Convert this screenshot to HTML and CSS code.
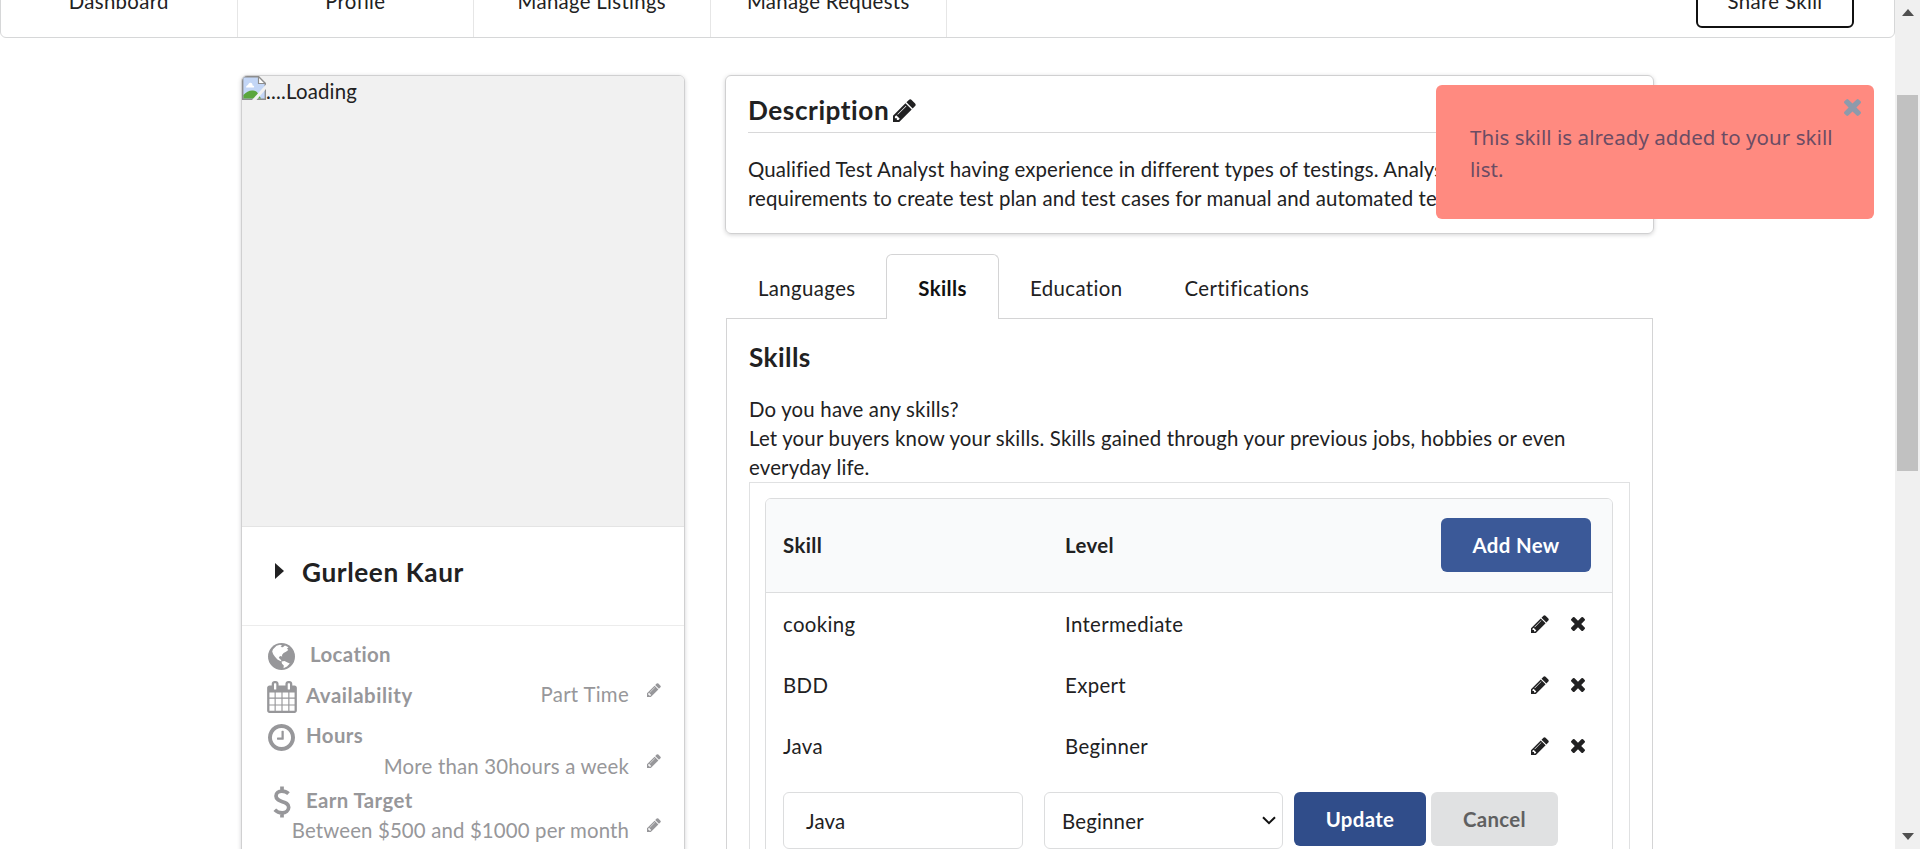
FILE: index.html
```
<!DOCTYPE html>
<html lang="en">
<head>
<meta charset="utf-8">
<title>Profile</title>
<link rel="stylesheet" href="styles.css">
</head>
<body>
<svg class="sprite" aria-hidden="true">
  <symbol id="pencil" viewBox="128 128 1536 1536"><path d="M491 1536l91-91-235-235-91 91v107h128v128h107zm523-928q0-22-22-22-10 0-17 7l-542 542q-7 7-7 17 0 22 22 22 10 0 17-7l542-542q7-7 7-17zm-54-192l416 416-832 832h-416v-416zm683 96q0 53-37 90l-166 166-416-416 166-165q36-38 90-38 53 0 91 38l235 234q37 39 37 91z"/></symbol>
  <symbol id="times" viewBox="302 366 1188 1188"><path d="M1490 1322q0 40-28 68l-136 136q-28 28-68 28t-68-28l-294-294-294 294q-28 28-68 28t-68-28l-136-136q-28-28-28-68t28-68l294-294-294-294q-28-28-28-68t28-68l136-136q28-28 68-28t68 28l294 294 294-294q28-28 68-28t68 28l136 136q28 28 28 68t-28 68l-294 294 294 294q28 28 28 68z"/></symbol>
  <symbol id="clock" viewBox="128 128 1536 1536"><path d="M1024 544v448q0 14-9 23t-23 9h-320q-14 0-23-9t-9-23v-64q0-14 9-23t23-9h224v-352q0-14 9-23t23-9h64q14 0 23 9t9 23zm416 352q0-148-73-273t-198-198-273-73-273 73-198 198-73 273 73 273 198 198 273 73 273-73 198-198 73-273zm224 0q0 209-103 385.5t-279.5 279.5-385.5 103-385.5-103-279.5-279.5-103-385.5 103-385.5 279.5-279.5 385.5-103 385.5 103 279.5 279.5 103 385.5z"/></symbol>
  <symbol id="calendar" viewBox="64 0 1664 1792"><path d="M192 1664h288v-288h-288v288zm352 0h320v-288h-320v288zm-352-352h288v-320h-288v320zm352 0h320v-320h-320v320zm-352-384h288v-288h-288v288zm736 736h320v-288h-320v288zm-384-736h320v-288h-320v288zm768 736h288v-288h-288v288zm-384-352h320v-320h-320v320zm-352-864v-288q0-13-9.500-22.500t-22.500-9.500h-64q-13 0-22.500 9.500t-9.500 22.500v288q0 13 9.500 22.500t22.500 9.500h64q13 0 22.500-9.500t9.500-22.500zm736 864h288v-320h-288v320zm-384-384h320v-288h-320v288zm384 0h288v-288h-288v288zm32-480v-288q0-13-9.500-22.500t-22.500-9.500h-64q-13 0-22.500 9.500t-9.500 22.500v288q0 13 9.500 22.500t22.500 9.500h64q13 0 22.500-9.500t9.500-22.500zm384-64v1280q0 52-38 90t-90 38h-1408q-52 0-90-38t-38-90v-1280q0-52 38-90t90-38h128v-96q0-66 47-113t113-47h64q66 0 113 47t47 113v96h384v-96q0-66 47-113t113-47h64q66 0 113 47t47 113v96h128q52 0 90 38t38 90z"/></symbol>
  <symbol id="globe" viewBox="0 0 27 27"><circle cx="13.500" cy="13.500" r="13.500"/><path fill="#fff" d="M5 6.200L8.500 2.800 12 1.700 14 2.600 12.600 4 14.800 4.200 17 2.600 20.500 4.300 19 5.600 20.300 7 18 8.800 15.600 10 14 12 14.200 13.400 12 13 10.800 14.800 12.200 16.200 13.400 17.300 12.800 18.200 9.400 16.600 6.800 13.600 5.200 11.200 4.200 8.600z"/><path fill="#fff" d="M13.500 18.600L16.500 18 19.500 19.400 21.800 20.600 19 23.500 15.500 25.300 15.800 22.500 14 20.800z"/></symbol>
  <symbol id="dollar" viewBox="0 0 18 32"><path fill="none" stroke="currentColor" stroke-width="3.700" d="M15.500 7.700C13.500 5.800 11 5.200 8.800 5.200 5.500 5.200 3 6.800 3 10c0 7.200 12.700 4.200 12.700 11.300 0 3.400-3 5.500-6.600 5.500-3 0-5.500-1.200-7.300-3.100M9 .5V5M9 27v4.600"/></symbol>
</svg>
<div class="window">
  <div class="page">
    <nav class="nav">
      <a class="nav-item">Dashboard</a>
      <a class="nav-item">Profile</a>
      <a class="nav-item">Manage Listings</a>
      <a class="nav-item">Manage Requests</a>
      <button class="share">Share Skill</button>
    </nav>
    <main class="main">
      <aside class="card">
        <div class="photo">
          <svg class="broken" viewBox="0 0 24 24"><path d="M.7.700H16.500L23.300 7.500V23.300H.7z" fill="#c3d6f6" stroke="#8d8d8d" stroke-width="1.400"/><path d="M16.500.7V7.500H23.300z" fill="#fff" stroke="#8d8d8d" stroke-width="1.200"/><path d="M4 11.500c0-2 2-2 2.500-3.500C8 5.500 11 7 10.500 9.500 12.500 9.500 12.500 11.500 11.500 11.500z" fill="#fff"/><path d="M1.400 22.600V19C4 16 8 14 11 14.500c3 0 5 2 8 8.100z" fill="#5aa63c"/><path d="M24 8.500V13L14.500 24H10z" fill="#f1f1f1"/></svg><span>....Loading</span>
        </div>
        <div class="name"><i class="caret"></i><span>Gurleen Kaur</span></div>
        <div class="details">
          <div class="row loc"><svg class="ico round"><use href="#globe"/></svg><b>Location</b></div>
          <div class="row avail"><svg class="ico cal"><use href="#calendar"/></svg><b>Availability</b><span class="value">Part Time</span><svg class="edit"><use href="#pencil"/></svg></div>
          <div class="row hours"><svg class="ico round"><use href="#clock"/></svg><b>Hours</b></div>
          <div class="row val"><span class="value">More than 30hours a week</span><svg class="edit"><use href="#pencil"/></svg></div>
          <div class="row earn"><svg class="ico usd"><use href="#dollar"/></svg><b>Earn Target</b></div>
          <div class="row val last"><span class="value">Between $500 and $1000 per month</span><svg class="edit"><use href="#pencil"/></svg></div>
        </div>
      </aside>
      <section class="content">
        <div class="description">
          <h3 class="desc-title">Description<svg class="title-edit"><use href="#pencil"/></svg></h3>
          <p class="desc-text">Qualified Test Analyst having experience in different types of testings. Analysing<br>requirements to create test plan and test cases for manual and automated testing.</p>
        </div>
        <div class="tabs">
          <a class="tab first">Languages</a>
          <a class="tab active">Skills</a>
          <a class="tab">Education</a>
          <a class="tab">Certifications</a>
        </div>
        <div class="panel">
          <h3 class="panel-title">Skills</h3>
          <p class="panel-text">Do you have any skills?<br>Let your buyers know your skills. Skills gained through your previous jobs, hobbies or even<br>everyday life.</p>
          <div class="segment">
            <div class="table">
              <div class="line head"><b>Skill</b><b>Level</b><button class="btn add">Add New</button></div>
              <div class="line"><span>cooking</span><span>Intermediate</span><span class="actions"><svg class="pen"><use href="#pencil"/></svg><svg class="del"><use href="#times"/></svg></span></div>
              <div class="line"><span>BDD</span><span>Expert</span><span class="actions"><svg class="pen"><use href="#pencil"/></svg><svg class="del"><use href="#times"/></svg></span></div>
              <div class="line"><span>Java</span><span>Beginner</span><span class="actions"><svg class="pen"><use href="#pencil"/></svg><svg class="del"><use href="#times"/></svg></span></div>
              <div class="form">
                <div class="field text">Java</div>
                <div class="field select"><span>Beginner</span><svg class="chev" viewBox="0 0 14 9"><path d="M1 1.200l6 6 6-6"/></svg></div>
                <button class="btn update">Update</button>
                <button class="btn cancel">Cancel</button>
              </div>
            </div>
          </div>
        </div>
      </section>
    </main>
    <div class="toast"><span>This skill is already added to your skill<br>list.</span><svg class="close"><use href="#times"/></svg></div>
  </div>
  <div class="scroll"><i class="arrow up"></i><i class="thumb"></i><i class="arrow down"></i></div>
</div>
</body>
</html>
```
FILE: styles.css
```
* { box-sizing: border-box; }
body { margin: 0; height: 849px; overflow: hidden; background: #fff; font: 20.4px/29px Lato, sans-serif; letter-spacing: .19px; color: #212122; }
h3, p { margin: 0; }
b, h3 { font-weight: 700; letter-spacing: .4px; }
button { font: 700 20.4px/1 Lato, sans-serif; letter-spacing: .35px; padding: 0; border: 0; }
svg { flex: none; fill: currentColor; }
.sprite { position: absolute; width: 0; height: 0; }
.window { display: flex; height: 849px; overflow: hidden; }
.page { position: relative; width: 1895px; height: 849px; overflow: hidden; }

.nav { display: flex; height: 73px; margin-top: -35px; border: 1px solid #d6d7d8; border-radius: 6px; }
.nav-item { width: 236.500px; border-right: 1px solid #e6e6e6; text-align: center; line-height: 71px; letter-spacing: .3px; }
.share { margin: 8px 40px 0 auto; width: 158px; height: 54px; border: 2px solid #111; border-radius: 6px; background: #fff; color: #212122; font-weight: 400; }

.main { display: flex; gap: 40px; padding: 37px 0 0 241px; }
.card { width: 444px; height: 830px; border: 1px solid #d0d0d1; border-radius: 6px; box-shadow: 0 1px 4px #d4d4d5; overflow: hidden; }
.photo { display: flex; height: 451px; background: #f1f1f1; border-bottom: 1px solid #e4e4e4; line-height: 30px; }
.broken { width: 24px; height: 24px; }
.name { display: flex; align-items: center; height: 99px; padding: 0 0 7px 33px; border-bottom: 1px solid #ececec; font-size: 26.2px; font-weight: 700; letter-spacing: .6px; }
.caret { width: 10px; margin: -3px 17px 0 0; border: solid transparent; border-width: 8px 0 8px 9px; border-left-color: #212122; }
.details { padding: 9px 0 0 24px; color: #97979a; }
.row { display: flex; align-items: center; }
.row b { margin-top: -3px; }
.ico { margin-right: 9px; }
.round { width: 27px; height: 27px; margin: 0 11px 0 2px; }
.cal { width: 30px; height: 32px; margin-left: 1px; }
.usd { width: 18px; height: 32px; margin: 0 15px 0 7px; }
.loc { height: 42px; }
.loc .ico { margin-right: 15px; }
.avail { height: 39px; }
.avail b { letter-spacing: .55px; }
.avail .value { margin-top: -4px; letter-spacing: .3px; }
.hours { height: 43px; }
.hours b { margin-top: -4px; }
.earn { height: 35px; margin-top: 3px; }
.val { height: 30px; margin-top: -8px; }
.val.last { margin-top: -4px; letter-spacing: .14px; }
.value { margin-left: auto; }
.edit { width: 14px; height: 14px; margin: -10px 23px 0 18px; }
.avail .edit { margin-top: -14px; }

.content { width: 929px; }
.description { height: 159px; padding: 18px 22px 0; border: 1px solid #d0d0d1; border-radius: 6px; box-shadow: 0 1px 4px #d4d4d5; }
.desc-title { display: flex; align-items: center; height: 39px; border-bottom: 1px solid #d8d8d9; padding-bottom: 6px; font-size: 26.2px; letter-spacing: .55px; }
.title-edit { width: 23px; height: 23px; margin-left: 4px; }
.desc-text { padding-top: 22px; white-space: nowrap; letter-spacing: .12px; }
.tabs { display: flex; height: 65px; margin: 20px 1px 0; border-bottom: 1px solid #d4d4d5; letter-spacing: .38px; }
.tab { height: 65px; padding: 0 31px; line-height: 69px; }
.tab.first { width: 160px; padding: 0 0 0 32px; }
.tab.active { width: 113px; padding: 0; text-align: center; line-height: 67px; border: 1px solid #d4d4d5; border-bottom: 0; border-radius: 6px 6px 0 0; background: #fff; font-weight: 700; color: #111; }
.panel { height: 620px; margin: 0 1px; padding: 23px 22px 0; border: 1px solid #d4d4d5; border-top: 0; }
.panel-title { font-size: 26.2px; line-height: 31px; }
.panel-text { padding: 22px 0 0; white-space: nowrap; }
.segment { height: 500px; padding: 15px 16px 15px 15px; border: 1px solid #e0e1e2; }
.table { height: 480px; border: 1px solid #dcddde; border-radius: 6px; }
.line { display: grid; grid-template-columns: 282px 282px 1fr; align-items: center; height: 61px; padding: 1px 21px 0 17px; }
.line > span { letter-spacing: .35px; }
.line.head { height: 94px; padding: 0 21px 1px 17px; border-bottom: 1px solid #dcddde; background: #f9fafb; border-radius: 5px 5px 0 0; }
.btn { height: 54px; border-radius: 6px; color: #fff; }
.add { width: 150px; justify-self: end; background: #3b5998; }
.actions { display: flex; align-items: center; justify-content: flex-end; gap: 22px; padding-right: 6px; }
.pen { width: 18px; height: 18px; }
.del { width: 14px; height: 14px; }
.form { display: flex; padding: 16px 0 0 17px; }
.field { height: 57px; border: 1px solid #dcddde; border-radius: 6px; line-height: 56px; }
.text { width: 240px; padding-left: 22px; }
.select { display: flex; align-items: center; justify-content: space-between; width: 239px; margin: 0 11px 0 21px; padding: 0 6px 0 17px; }
.chev { width: 14px; height: 9px; fill: none; stroke: #111; stroke-width: 2; }
.update { width: 132px; background: #304d8a; margin-right: 5px; }
.cancel { width: 127px; background: #e0e1e2; color: #5f6061; }

.toast { position: absolute; left: 1436px; top: 85px; width: 438px; height: 134px; padding: 36px 34px; border-radius: 6px; background: #ff8a80; color: #6b4c64; font: 20.500px/32px "Noto Sans", sans-serif; letter-spacing: .05px; white-space: nowrap; }
.close { position: absolute; right: 13px; top: 14px; width: 17px; height: 17px; color: #8e9aab; }

.scroll { display: flex; flex-direction: column; align-items: center; width: 25px; background: #f0f0f0; }
.arrow { border: solid transparent; border-width: 0 6px; }
.up { margin-top: 9px; border-bottom: 7px solid #505050; }
.thumb { width: 21px; height: 376px; margin-top: 79px; background: #c1c1c1; }
.down { margin: auto 0 9px; border-top: 7px solid #505050; }
```
